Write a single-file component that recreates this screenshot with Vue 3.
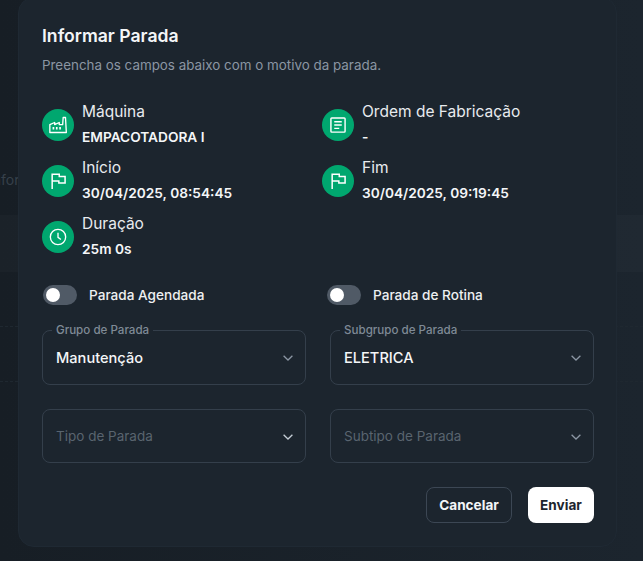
<script setup>
const infoRows = [
  { label: 'Máquina', value: 'EMPACOTADORA I', icon: 'factory' },
  { label: 'Ordem de Fabricação', value: '-', icon: 'order' },
  { label: 'Início', value: '30/04/2025, 08:54:45', icon: 'flag' },
  { label: 'Fim', value: '30/04/2025, 09:19:45', icon: 'flag' },
  { label: 'Duração', value: '25m 0s', icon: 'clock' },
]

const selects = [
  { label: 'Grupo de Parada', value: 'Manutenção' },
  { label: 'Subgrupo de Parada', value: 'ELETRICA' },
  { placeholder: 'Tipo de Parada', strong: true },
  { placeholder: 'Subtipo de Parada' },
]
</script>

<template>
  <div class="page">
    <div class="behind">
      <span class="behind-text">Informações</span>
      <div class="behind-head"></div>
      <div class="behind-row"></div>
      <div class="behind-row"></div>
    </div>

    <div class="modal">
      <h2 class="title">Informar Parada</h2>
      <p class="subtitle">Preencha os campos abaixo com o motivo da parada.</p>

      <div class="info-grid">
        <div v-for="row in infoRows" :key="row.label" class="info">
          <span class="info-icon">
            <svg v-if="row.icon === 'factory'" viewBox="0 0 24 24" width="20" height="20" fill="none" stroke="#fff" stroke-width="1.6">
              <path d="M2.2 21V11.5L8 9v2.5L13.5 9v2.5H17.6L18.2 3H21L22 21Z" stroke-linejoin="round" />
              <path d="M6.5 14.5v3M10.5 14.5v3M14.5 14.5v3" stroke-width="2" />
            </svg>
            <svg v-else-if="row.icon === 'order'" viewBox="0 0 24 24" width="20" height="20" fill="none" stroke="#fff" stroke-width="1.7">
              <rect x="3.5" y="3.5" width="17" height="17" rx="1" />
              <path d="M7.5 8h9M7.5 12h9M7.5 16h6" />
            </svg>
            <svg v-else-if="row.icon === 'flag'" viewBox="0 0 24 24" width="20" height="20" fill="none" stroke="#fff" stroke-width="1.8">
              <path d="M5 21.5V4H13.5V6.5H20.5V14.5H13V12H5" />
            </svg>
            <svg v-else viewBox="0 0 24 24" width="20" height="20" fill="none" stroke="#fff" stroke-width="1.6">
              <circle cx="12" cy="12" r="9.2" />
              <path d="M12 7v5.5l3.5 2.5" />
            </svg>
          </span>
          <div class="info-text">
            <span class="info-label">{{ row.label }}</span>
            <span class="info-value">{{ row.value }}</span>
          </div>
        </div>
      </div>

      <div class="toggles">
        <label class="toggle"><span class="switch"><span class="knob"></span></span>Parada Agendada</label>
        <label class="toggle"><span class="switch"><span class="knob"></span></span>Parada de Rotina</label>
      </div>

      <div class="selects">
        <div v-for="(sel, i) in selects" :key="i" class="select" :class="{ 'select-empty': sel.placeholder }">
          <span v-if="sel.label" class="select-legend">{{ sel.label }}</span>
          <span :class="sel.placeholder ? 'select-placeholder' : 'select-value'">{{ sel.value || sel.placeholder }}</span>
          <svg class="chevron" :class="{ 'chevron-strong': sel.strong }" viewBox="0 0 10 6" width="10" height="6" fill="none" stroke-width="1.3">
            <path d="M0.6 0.8L5 5L9.4 0.8" />
          </svg>
        </div>
      </div>

      <div class="actions">
        <button class="btn btn-cancel">Cancelar</button>
        <button class="btn btn-send">Enviar</button>
      </div>
    </div>
  </div>
</template>

<style scoped>
.page {
  position: relative;
  width: 643px;
  height: 561px;
  overflow: hidden;
  background: linear-gradient(90deg, #171e25 0%, #1c252e 100%);
  font-family: Inter, "Liberation Sans", sans-serif;
}

.behind {
  padding-top: 171px;
}

.behind-text {
  display: block;
  margin-left: -11px;
  font-size: 14px;
  line-height: 18px;
  color: #36404a;
}

.behind-head {
  height: 57px;
  margin-top: 26px;
  background: rgba(255, 255, 255, 0.02);
}

.behind-row {
  height: 54px;
  border-bottom: 1px dashed #1f2830;
}

.modal {
  position: absolute;
  left: 18px;
  top: -3px;
  box-sizing: border-box;
  width: 599px;
  height: 550px;
  padding: 27px 22px 0 23px;
  border: 1px solid #1f2933;
  border-radius: 16px;
  background: #1c252e;
}

.title {
  margin: 0;
  font-size: 17.6px;
  line-height: 22px;
  font-weight: 600;
  color: #f4f6f8;
}

.subtitle {
  margin: 8px 0 0;
  font-size: 13.4px;
  line-height: 20px;
  color: #8b96a3;
}

.info-grid {
  display: grid;
  grid-template-columns: 280px 1fr;
  row-gap: 8px;
  margin-top: 26px;
}

.info {
  display: flex;
  align-items: center;
  gap: 8px;
  height: 48px;
}

.info-icon {
  display: flex;
  flex: none;
  align-items: center;
  justify-content: center;
  width: 32px;
  height: 32px;
  border-radius: 50%;
  background: #00a76f;
}

.info-text {
  display: flex;
  flex-direction: column;
}

.info-label {
  font-size: 15.5px;
  line-height: 24px;
  color: #e8ebee;
}

.info-value {
  font-size: 13.7px;
  line-height: 26px;
  font-weight: 600;
  color: #f4f6f8;
}

.toggles {
  display: grid;
  grid-template-columns: 284px 1fr;
  margin-top: 24px;
  padding-left: 1px;
}

.toggle {
  display: flex;
  align-items: center;
  gap: 12px;
  height: 20px;
  font-size: 13.6px;
  font-weight: 500;
  color: #eef0f2;
}

.switch {
  display: flex;
  align-items: center;
  width: 34px;
  height: 20px;
  padding-left: 3px;
  box-sizing: border-box;
  border-radius: 10px;
  background: #505a66;
}

.knob {
  width: 14px;
  height: 14px;
  border-radius: 50%;
  background: #fff;
}

.selects {
  display: grid;
  grid-template-columns: 264px 264px;
  column-gap: 24px;
  row-gap: 24px;
  margin-top: 25px;
}

.select {
  position: relative;
  display: flex;
  align-items: center;
  box-sizing: border-box;
  height: 55px;
  padding: 0 13px;
  border: 1px solid #343f4b;
  border-radius: 8px;
}

.select-empty {
  height: 54px;
}

.select-legend {
  position: absolute;
  top: -8px;
  left: 9px;
  padding: 0 4px;
  background: #1c252e;
  font-size: 11.6px;
  line-height: 14px;
  font-weight: 500;
  color: #7f8a96;
}

.select-value {
  font-size: 14.6px;
  font-weight: 500;
  color: #f4f6f8;
}

.select-placeholder {
  font-size: 13.5px;
  color: #59646f;
}

.chevron {
  position: absolute;
  right: 12px;
  top: 24px;
  stroke: #8b96a3;
}

.chevron-strong {
  stroke: #c4cdd5;
}

.actions {
  display: flex;
  justify-content: flex-end;
  gap: 16px;
  margin-top: 24px;
}

.btn {
  height: 36px;
  padding: 0;
  border-radius: 8px;
  font-family: inherit;
  font-size: 13.6px;
  font-weight: 700;
}

.btn-cancel {
  width: 86px;
  border: 1px solid #3c4754;
  background: transparent;
  color: #f4f6f8;
}

.btn-send {
  width: 66px;
  border: none;
  background: #fff;
  color: #1c252e;
}
</style>
